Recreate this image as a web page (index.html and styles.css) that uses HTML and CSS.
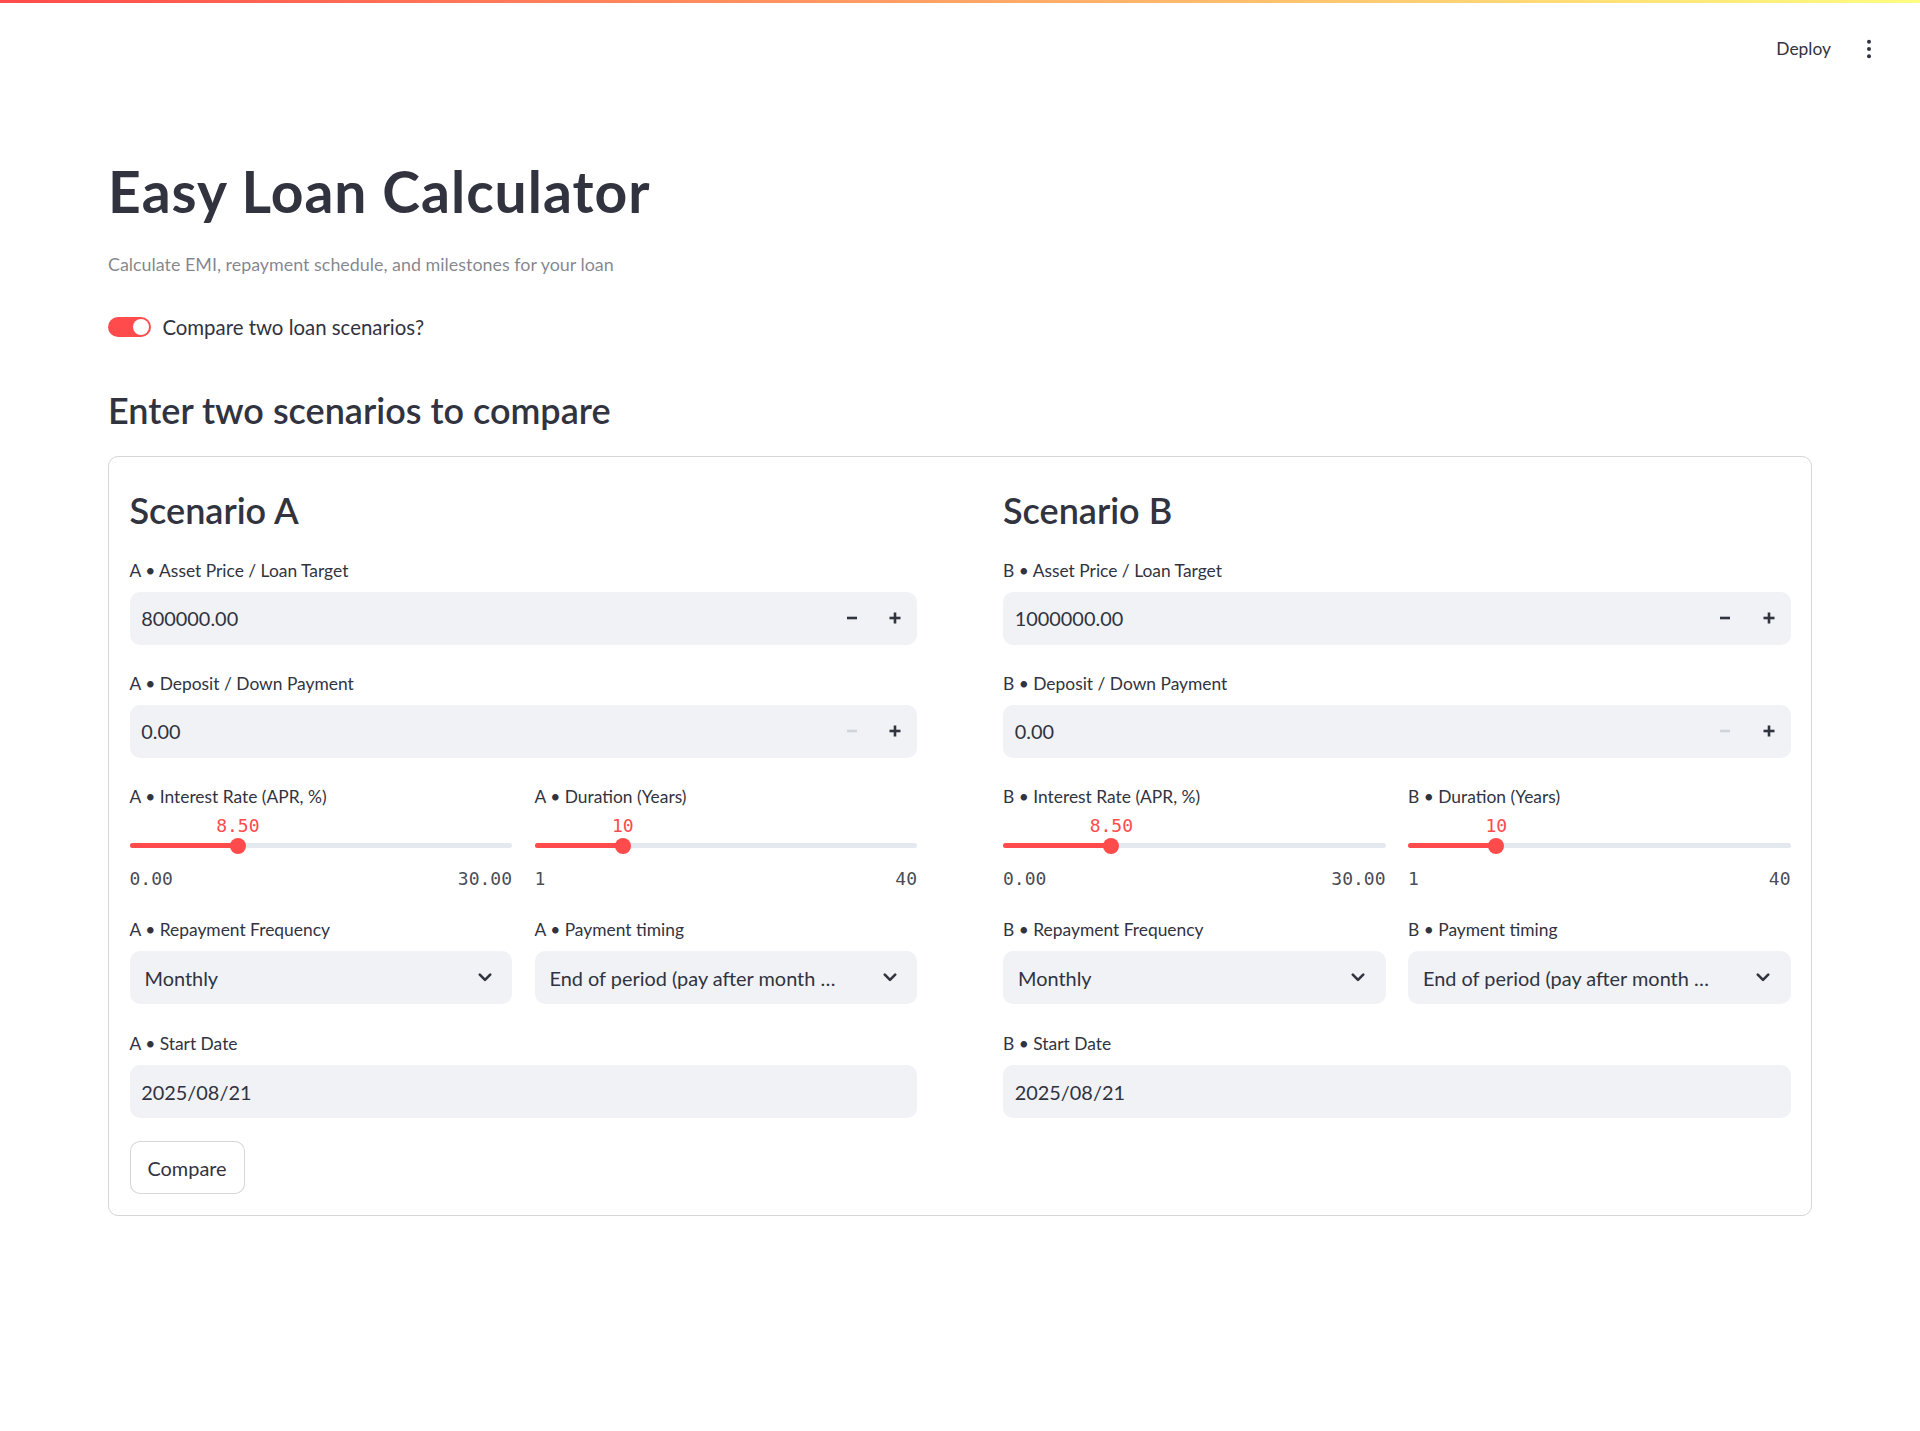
FILE: index.html
```html
<!DOCTYPE html>
<html lang="en">
<head>
<meta charset="utf-8">
<title>Easy Loan Calculator</title>
<link rel="stylesheet" href="styles.css">
</head>
<body>
<div class="decoration"></div>
<header class="topbar">
  <span class="deploy">Deploy</span>
  <svg class="menu-icon" width="24" height="24" viewBox="0 0 24 24" aria-hidden="true"><circle cx="12" cy="4.7" r="2"/><circle cx="12" cy="12" r="2"/><circle cx="12" cy="19.3" r="2"/></svg>
</header>
<main class="main">
  <h1 class="title">Easy Loan Calculator</h1>
  <p class="subtitle">Calculate EMI, repayment schedule, and milestones for your loan</p>
  <div class="toggle-row">
    <span class="toggle"><span class="knob"></span></span>
    <span class="toggle-label">Compare two loan scenarios?</span>
  </div>
  <h3 class="section-title">Enter two scenarios to compare</h3>
  <section class="card">
    <div class="scenario">
      <h3 class="scenario-title">Scenario A</h3>
      <div class="widget">
        <div class="label">A • Asset Price / Loan Target</div>
        <div class="field number-input">
          <span class="value">800000.00</span>
          <span class="step"><svg width="12" height="12" viewBox="0 0 12 12"><rect x="1" y="4.7" width="10" height="2.6"/></svg></span>
          <span class="step"><svg width="12" height="12" viewBox="0 0 12 12"><rect x="0.5" y="4.7" width="11" height="2.6"/><rect x="4.7" y="0.5" width="2.6" height="11"/></svg></span>
        </div>
      </div>
      <div class="widget">
        <div class="label">A • Deposit / Down Payment</div>
        <div class="field number-input">
          <span class="value">0.00</span>
          <span class="step disabled"><svg width="12" height="12" viewBox="0 0 12 12"><rect x="1" y="4.7" width="10" height="2.6"/></svg></span>
          <span class="step"><svg width="12" height="12" viewBox="0 0 12 12"><rect x="0.5" y="4.7" width="11" height="2.6"/><rect x="4.7" y="0.5" width="2.6" height="11"/></svg></span>
        </div>
      </div>
      <div class="widget pair">
        <div class="slider-widget">
          <div class="label">A • Interest Rate (APR, %)</div>
          <div class="slider">
            <div class="track"><div class="fill" style="width:28.33%"></div></div>
            <div class="thumb" style="left:28.33%"></div>
            <div class="thumb-value" style="left:28.33%">8.50</div>
          </div>
          <div class="ticks"><span>0.00</span><span>30.00</span></div>
        </div>
        <div class="slider-widget">
          <div class="label">A • Duration (Years)</div>
          <div class="slider">
            <div class="track"><div class="fill" style="width:23.08%"></div></div>
            <div class="thumb" style="left:23.08%"></div>
            <div class="thumb-value" style="left:23.08%">10</div>
          </div>
          <div class="ticks"><span>1</span><span>40</span></div>
        </div>
      </div>
      <div class="widget pair selects">
        <div>
          <div class="label">A • Repayment Frequency</div>
          <div class="field select">
            <span class="select-text">Monthly</span>
            <svg class="chevron" width="14" height="9" viewBox="0 0 14 9"><path d="M1.8 1.6 L7 6.8 L12.2 1.6"/></svg>
          </div>
        </div>
        <div>
          <div class="label">A • Payment timing</div>
          <div class="field select">
            <span class="select-text">End of period (pay after month …</span>
            <svg class="chevron" width="14" height="9" viewBox="0 0 14 9"><path d="M1.8 1.6 L7 6.8 L12.2 1.6"/></svg>
          </div>
        </div>
      </div>
      <div class="widget date-widget">
        <div class="label">A • Start Date</div>
        <div class="field date"><span class="value">2025/08/21</span></div>
      </div>
      <button class="btn" type="button">Compare</button>
    </div>

    <div class="scenario">
      <h3 class="scenario-title">Scenario B</h3>
      <div class="widget">
        <div class="label">B • Asset Price / Loan Target</div>
        <div class="field number-input">
          <span class="value">1000000.00</span>
          <span class="step"><svg width="12" height="12" viewBox="0 0 12 12"><rect x="1" y="4.7" width="10" height="2.6"/></svg></span>
          <span class="step"><svg width="12" height="12" viewBox="0 0 12 12"><rect x="0.5" y="4.7" width="11" height="2.6"/><rect x="4.7" y="0.5" width="2.6" height="11"/></svg></span>
        </div>
      </div>
      <div class="widget">
        <div class="label">B • Deposit / Down Payment</div>
        <div class="field number-input">
          <span class="value">0.00</span>
          <span class="step disabled"><svg width="12" height="12" viewBox="0 0 12 12"><rect x="1" y="4.7" width="10" height="2.6"/></svg></span>
          <span class="step"><svg width="12" height="12" viewBox="0 0 12 12"><rect x="0.5" y="4.7" width="11" height="2.6"/><rect x="4.7" y="0.5" width="2.6" height="11"/></svg></span>
        </div>
      </div>
      <div class="widget pair">
        <div class="slider-widget">
          <div class="label">B • Interest Rate (APR, %)</div>
          <div class="slider">
            <div class="track"><div class="fill" style="width:28.33%"></div></div>
            <div class="thumb" style="left:28.33%"></div>
            <div class="thumb-value" style="left:28.33%">8.50</div>
          </div>
          <div class="ticks"><span>0.00</span><span>30.00</span></div>
        </div>
        <div class="slider-widget">
          <div class="label">B • Duration (Years)</div>
          <div class="slider">
            <div class="track"><div class="fill" style="width:23.08%"></div></div>
            <div class="thumb" style="left:23.08%"></div>
            <div class="thumb-value" style="left:23.08%">10</div>
          </div>
          <div class="ticks"><span>1</span><span>40</span></div>
        </div>
      </div>
      <div class="widget pair selects">
        <div>
          <div class="label">B • Repayment Frequency</div>
          <div class="field select">
            <span class="select-text">Monthly</span>
            <svg class="chevron" width="14" height="9" viewBox="0 0 14 9"><path d="M1.8 1.6 L7 6.8 L12.2 1.6"/></svg>
          </div>
        </div>
        <div>
          <div class="label">B • Payment timing</div>
          <div class="field select">
            <span class="select-text">End of period (pay after month …</span>
            <svg class="chevron" width="14" height="9" viewBox="0 0 14 9"><path d="M1.8 1.6 L7 6.8 L12.2 1.6"/></svg>
          </div>
        </div>
      </div>
      <div class="widget date-widget">
        <div class="label">B • Start Date</div>
        <div class="field date"><span class="value">2025/08/21</span></div>
      </div>
    </div>
  </section>
</main>
</body>
</html>
```

FILE: styles.css
```css
* { box-sizing: border-box; }

body {
  margin: 0;
  font-family: "Lato", "Noto Sans", sans-serif;
  color: #31333f;
  background: #ffffff;
}

.decoration {
  height: 3px;
  background: linear-gradient(90deg, #ff4b4b, #fffd80);
}

.topbar {
  height: 92px;
  display: flex;
  align-items: center;
  justify-content: flex-end;
  gap: 26px;
  padding-right: 39px;
}

.deploy {
  font-size: 17.4px;
  line-height: 26px;
  color: #31333f;
}

.menu-icon {
  display: block;
  fill: #31333f;
}

.main {
  padding: 0 108px;
}

.title {
  margin: 62.5px 0 0;
  font-size: 57px;
  line-height: 66px;
  font-weight: 700;
  letter-spacing: 1px;
}

.subtitle {
  margin: 27.1px 0 0;
  font-size: 17.9px;
  line-height: 26px;
  color: rgba(49, 51, 63, 0.6);
}

.toggle-row {
  display: flex;
  align-items: center;
  gap: 11.7px;
  height: 30px;
  margin-top: 35px;
}

.toggle {
  width: 42.7px;
  height: 20px;
  border-radius: 10px;
  background: #ff4b4b;
  display: flex;
  align-items: center;
  justify-content: flex-end;
  padding: 2px;
}

.knob {
  width: 16px;
  height: 16px;
  border-radius: 50%;
  background: #ffffff;
}

.toggle-label {
  font-size: 20.4px;
  line-height: 30px;
}

.section-title {
  margin: 46.5px 0 0;
  font-size: 36px;
  line-height: 44px;
  font-weight: 600;
}

.card {
  margin-top: 23.7px;
  border: 1px solid rgba(49, 51, 63, 0.2);
  border-radius: 10px;
  padding: 20.5px 20.5px 20.7px;
  display: grid;
  grid-template-columns: 1fr 1fr;
  column-gap: 86px;
}

.scenario {
  display: flex;
  flex-direction: column;
  min-width: 0;
}

.scenario-title {
  margin: 10.5px 0 0;
  font-size: 36px;
  line-height: 44px;
  font-weight: 600;
}

.widget {
  margin-top: 26.4px;
}

.label {
  font-size: 17.4px;
  line-height: 26px;
  margin-bottom: 8px;
  white-space: nowrap;
}

.slider-widget .label {
  margin-bottom: 0;
}

.field {
  height: 52.5px;
  background: #f0f2f6;
  border-radius: 10px;
  display: flex;
  align-items: center;
  font-size: 19.9px;
  color: #31333f;
}

.field .value {
  flex: 1;
  padding-left: 11.7px;
}

.step {
  width: 43.4px;
  height: 100%;
  display: flex;
  align-items: center;
  justify-content: center;
  fill: #31333f;
}

.step.disabled {
  fill: #cfd3dc;
}

.step svg {
  display: block;
}

.pair {
  display: grid;
  grid-template-columns: 1fr 1fr;
  column-gap: 22.5px;
}

.slider-widget {
  min-width: 0;
}

.slider {
  position: relative;
  height: 57px;
}

.track {
  position: absolute;
  left: 0;
  right: 0;
  top: 33.5px;
  height: 5px;
  border-radius: 3px;
  background: #e4e8ef;
  overflow: hidden;
}

.fill {
  height: 100%;
  background: #ff4b4b;
}

.thumb {
  position: absolute;
  top: 28px;
  width: 16px;
  height: 16px;
  margin-left: -8px;
  border-radius: 50%;
  background: #ff4b4b;
}

.thumb-value {
  position: absolute;
  top: 3.9px;
  transform: translateX(-50%);
  font-family: "DejaVu Sans Mono", "Liberation Mono", monospace;
  font-size: 18px;
  line-height: 24px;
  color: #ff4b4b;
  white-space: nowrap;
}

.ticks {
  display: flex;
  justify-content: space-between;
  font-family: "DejaVu Sans Mono", "Liberation Mono", monospace;
  font-size: 18px;
  line-height: 24px;
  color: rgba(49, 51, 63, 0.9);
}

.selects {
  margin-top: 26.5px;
}

.select {
  padding: 0 20.5px 0 15px;
  gap: 12px;
}

.select-text {
  flex: 1;
  min-width: 0;
  white-space: nowrap;
  overflow: hidden;
  text-overflow: ellipsis;
}

.chevron {
  display: block;
  flex: none;
  fill: none;
  stroke: #31333f;
  stroke-width: 2.6;
  stroke-linecap: round;
  stroke-linejoin: round;
}

.date-widget {
  margin-top: 27.2px;
}

.date {
  height: 53px;
}

.btn {
  align-self: flex-start;
  margin-top: 23px;
  height: 53px;
  padding: 0 17px;
  border: 1px solid rgba(49, 51, 63, 0.2);
  border-radius: 10px;
  background: #ffffff;
  font-family: "Lato", "Noto Sans", sans-serif;
  font-size: 19.9px;
  color: #31333f;
}
```
